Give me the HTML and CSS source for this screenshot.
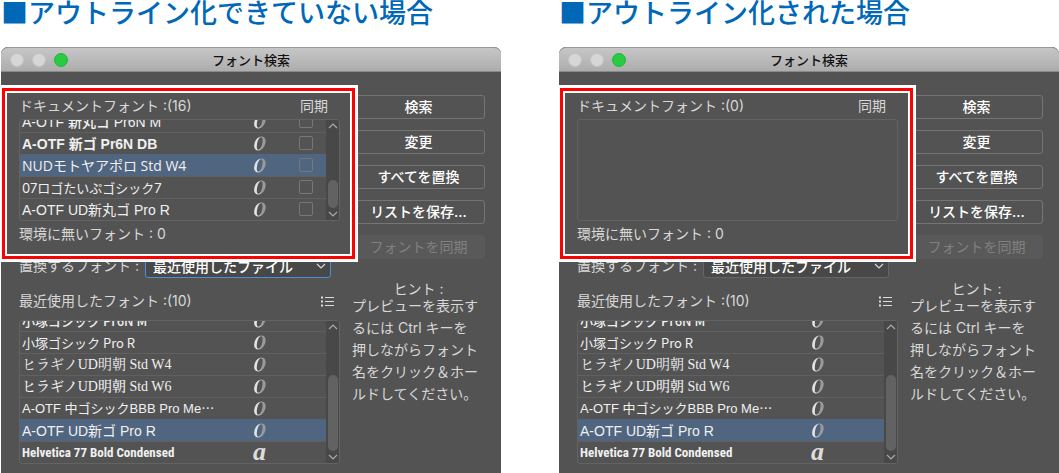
FILE: index.html
```html
<!DOCTYPE html>
<html lang="ja">
<head>
    <meta charset="UTF-8">
    <meta name="viewport" content="width=device-width, initial-scale=1.0">
    <title>フォント検索</title>
    <link rel="stylesheet" href="styles.css">
</head>
<body>
    <!-- Shared icons -->
    <svg class="sprite" aria-hidden="true">
        <defs>
            <linearGradient id="shade" x1="0" y1="0" x2="1" y2="0">
                <stop offset="0.35" stop-color="#e2e2e2"/>
                <stop offset="0.65" stop-color="#9a9a9a"/>
            </linearGradient>
            <symbol id="opentype" viewBox="0 0 14 16">
                <path fill="url(#shade)" fill-rule="evenodd" d="M8.4 .5C11.400 .5 13 2.700 12.600 6C12 10.800 9 14.500 5.400 14.500C2.400 14.500 .8 12.300 1.200 9C1.800 4.200 4.800 .5 8.400 .5ZM8 1.300C6 1.400 4.400 5 3.900 9.200C3.600 12.300 4.100 13.700 5.400 13.700C7.400 13.600 9 10 9.500 5.800C9.800 2.800 9.300 1.300 8 1.300Z"/>
            </symbol>
            <symbol id="up" viewBox="0 0 10 6">
                <path d="M1 5L5 1L9 5" fill="none" stroke="currentColor" stroke-width="1.2"/>
            </symbol>
            <symbol id="down" viewBox="0 0 10 6">
                <path d="M1 1L5 5L9 1" fill="none" stroke="currentColor" stroke-width="1.2"/>
            </symbol>
            <symbol id="menu" viewBox="0 0 14 11">
                <path d="M0 1.500H2M0 5.500H2M0 9.500H2" stroke="currentColor" stroke-width="2"/>
                <path d="M4 1.500H13M4 5.500H13M4 9.500H13" stroke="currentColor"/>
            </symbol>
        </defs>
    </svg>

    <main class="compare">
        <!-- Not outlined -->
        <section class="case">
            <h1>■アウトライン化できていない場合</h1>
            <div class="dialog">
                <div class="titlebar">
                    <span class="dot"></span><span class="dot"></span><span class="dot green"></span>
                    <h2>フォント検索</h2>
                </div>
                <div class="content">
                    <div class="fonts">
                        <div class="document-fonts">
                            <div class="label-row"><span>ドキュメントフォント :(16)</span><span class="sync">同期</span></div>
                            <div class="list">
                                <ul>
                                    <li><span class="name gothic medium">A-OTF 新丸ゴ Pr6N M</span><svg class="type"><use href="#opentype"/></svg><input type="checkbox" aria-label="同期"></li>
                                    <li><span class="name gothic bold">A-OTF 新ゴ Pr6N DB</span><svg class="type"><use href="#opentype"/></svg><input type="checkbox" aria-label="同期"></li>
                                    <li class="selected"><span class="name human">NUDモトヤアポロ Std W4</span><svg class="type"><use href="#opentype"/></svg><input type="checkbox" aria-label="同期"></li>
                                    <li><span class="name logo">07ロゴたいぷゴシック7</span><svg class="type"><use href="#opentype"/></svg><input type="checkbox" aria-label="同期"></li>
                                    <li><span class="name gothic">A-OTF UD新丸ゴ Pro R</span><svg class="type"><use href="#opentype"/></svg><input type="checkbox" aria-label="同期"></li>
                                </ul>
                                <div class="scrollbar">
                                    <svg class="arrow"><use href="#up"/></svg>
                                    <span class="thumb short"></span>
                                    <svg class="arrow"><use href="#down"/></svg>
                                </div>
                            </div>
                            <p class="missing">環境に無いフォント : 0</p>
                        </div>
                        <div class="replace">
                            <label for="replace1">置換するフォント :</label>
                            <span class="select focused">
                                <select id="replace1"><option>最近使用したファイル</option></select>
                                <svg><use href="#down"/></svg>
                            </span>
                        </div>
                        <div class="label-row recent"><span>最近使用したフォント :(10)</span><button class="menu" aria-label="メニュー"><svg><use href="#menu"/></svg></button></div>
                        <div class="list tall">
                            <ul>
                                <li><span class="name kozuka medium">小塚ゴシック Pr6N M</span><svg class="type"><use href="#opentype"/></svg></li>
                                <li><span class="name kozuka">小塚ゴシック Pro R</span><svg class="type"><use href="#opentype"/></svg></li>
                                <li><span class="name mincho">ヒラギノUD明朝 Std W4</span><svg class="type"><use href="#opentype"/></svg></li>
                                <li><span class="name mincho medium">ヒラギノUD明朝 Std W6</span><svg class="type"><use href="#opentype"/></svg></li>
                                <li><span class="name gothic small">A-OTF 中ゴシックBBB Pro Me⋯</span><svg class="type"><use href="#opentype"/></svg></li>
                                <li class="selected"><span class="name gothic">A-OTF UD新ゴ Pro R</span><svg class="type"><use href="#opentype"/></svg></li>
                                <li><span class="name narrow">Helvetica 77 Bold Condensed</span><span class="type letter">a</span></li>
                            </ul>
                            <div class="scrollbar">
                                <svg class="arrow"><use href="#up"/></svg>
                                <span class="thumb"></span>
                                <svg class="arrow"><use href="#down"/></svg>
                            </div>
                        </div>
                    </div>
                    <div class="actions">
                        <button>検索</button>
                        <button>変更</button>
                        <button>すべてを置換</button>
                        <button>リストを保存...</button>
                        <button disabled>フォントを同期</button>
                        <h3>ヒント :</h3>
                        <p>プレビューを表示す<br>るには Ctrl キーを<br>押しながらフォント<br>名をクリック＆ホー<br>ルドしてください。</p>
                    </div>
                </div>
            </div>
        </section>

        <!-- Outlined -->
        <section class="case">
            <h1>■アウトライン化された場合</h1>
            <div class="dialog">
                <div class="titlebar">
                    <span class="dot"></span><span class="dot"></span><span class="dot green"></span>
                    <h2>フォント検索</h2>
                </div>
                <div class="content">
                    <div class="fonts">
                        <div class="document-fonts">
                            <div class="label-row"><span>ドキュメントフォント :(0)</span><span class="sync">同期</span></div>
                            <div class="list"></div>
                            <p class="missing">環境に無いフォント : 0</p>
                        </div>
                        <div class="replace">
                            <label for="replace2">置換するフォント :</label>
                            <span class="select">
                                <select id="replace2"><option>最近使用したファイル</option></select>
                                <svg><use href="#down"/></svg>
                            </span>
                        </div>
                        <div class="label-row recent"><span>最近使用したフォント :(10)</span><button class="menu" aria-label="メニュー"><svg><use href="#menu"/></svg></button></div>
                        <div class="list tall">
                            <ul>
                                <li><span class="name kozuka medium">小塚ゴシック Pr6N M</span><svg class="type"><use href="#opentype"/></svg></li>
                                <li><span class="name kozuka">小塚ゴシック Pro R</span><svg class="type"><use href="#opentype"/></svg></li>
                                <li><span class="name mincho">ヒラギノUD明朝 Std W4</span><svg class="type"><use href="#opentype"/></svg></li>
                                <li><span class="name mincho medium">ヒラギノUD明朝 Std W6</span><svg class="type"><use href="#opentype"/></svg></li>
                                <li><span class="name gothic small">A-OTF 中ゴシックBBB Pro Me⋯</span><svg class="type"><use href="#opentype"/></svg></li>
                                <li class="selected"><span class="name gothic">A-OTF UD新ゴ Pro R</span><svg class="type"><use href="#opentype"/></svg></li>
                                <li><span class="name narrow">Helvetica 77 Bold Condensed</span><span class="type letter">a</span></li>
                            </ul>
                            <div class="scrollbar">
                                <svg class="arrow"><use href="#up"/></svg>
                                <span class="thumb"></span>
                                <svg class="arrow"><use href="#down"/></svg>
                            </div>
                        </div>
                    </div>
                    <div class="actions">
                        <button>検索</button>
                        <button>変更</button>
                        <button>すべてを置換</button>
                        <button>リストを保存...</button>
                        <button disabled>フォントを同期</button>
                        <h3>ヒント :</h3>
                        <p>プレビューを表示す<br>るには Ctrl キーを<br>押しながらフォント<br>名をクリック＆ホー<br>ルドしてください。</p>
                    </div>
                </div>
            </div>
        </section>
    </main>
</body>
</html>
```

FILE: styles.css
```css
* {
    box-sizing: border-box;
}
body {
    margin: 0;
    background: #fff;
    color: #d8d8d8;
    font-family: Inter, "Noto Sans CJK JP", sans-serif;
    font-size: 14px;
    line-height: 22px;
}
h1, h2, h3, p, ul {
    margin: 0;
    padding: 0;
}
.sprite {
    position: absolute;
    width: 0;
    height: 0;
}
.compare {
    display: grid;
    grid-template-columns: repeat(2, minmax(0, 1fr));
    gap: 58px;
    padding-left: 1px;
}
h1 {
    margin-bottom: 23px;
    color: #0068b7;
    font-family: "Noto Sans CJK JP", sans-serif;
    font-size: 27px;
    font-weight: 500;
    line-height: 24px;
    white-space: nowrap;
}

/* Dialog window */
.dialog {
    background: #535353;
    border-bottom: 1px solid #3c3c3c;
    border-radius: 7px 7px 0 0;
}
.titlebar {
    display: flex;
    align-items: center;
    gap: 8px;
    height: 25px;
    padding: 0 9px;
    background: linear-gradient(#c6c6c6, #adadad);
    border-top: 1px solid #999;
    border-bottom: 1px solid #8a8a8a;
    border-radius: 7px 7px 0 0;
}
.titlebar h2 {
    flex: 1;
    margin-right: 66px;
    color: #111;
    font-size: 13px;
    font-weight: 500;
    text-align: center;
}
.dot {
    width: 14px;
    height: 14px;
    border: 1px solid #c4c4c4;
    border-radius: 50%;
    background: #d6d6d6;
}
.dot.green {
    border-color: #25b53c;
    background: #28cb42;
}
.content {
    display: grid;
    grid-template-columns: minmax(0, 1fr) 133px;
    gap: 12px;
    padding: 23px 16px 9px 18px;
}

/* Font lists */
.document-fonts {
    position: relative;
}
.document-fonts::after {
    content: "";
    position: absolute;
    z-index: 1;
    top: -7px;
    right: -15px;
    bottom: -14px;
    left: -17px;
    border: 3px solid #f00;
    box-shadow: 0 0 0 3px #fff, inset 0 0 0 2px #fff;
    pointer-events: none;
}
.label-row {
    display: flex;
    justify-content: space-between;
    align-items: center;
}
.sync {
    margin-right: 12px;
}
.list {
    display: flex;
    height: 102px;
    margin: 2px 0;
    border: 1px solid #636363;
    border-radius: 3px;
    overflow: hidden;
}
.list.tall {
    height: 144px;
    margin: 8px 0 0;
}
.list ul {
    flex: 1;
    display: flex;
    flex-direction: column;
    justify-content: flex-end;
    list-style: none;
}
.list li {
    flex: none;
    display: grid;
    grid-template-columns: minmax(0, 1fr) 14px 32px 14px;
    align-items: center;
    height: 22px;
    padding: 0 13px 0 2px;
    border-top: 1px solid #606060;
    color: #f0f0f0;
}
.list li.selected {
    background: #50657f;
    border-color: #50657f;
}
.name {
    white-space: nowrap;
}
.type {
    width: 14px;
    height: 16px;
    margin-bottom: 1px;
}
.letter {
    font: italic bold 26px/14px "Liberation Serif", serif;
    color: #ddd;
}
.list input {
    grid-column: 4;
    appearance: none;
    width: 14px;
    height: 14px;
    margin: 0 0 2px;
    border: 1px solid #777;
    border-radius: 2px;
}
.gothic {
    font-family: "Liberation Sans", "Noto Sans CJK JP", sans-serif;
}
.human {
    font-family: "Open Sans", "Noto Sans CJK JP", sans-serif;
}
.kozuka {
    font-family: "Noto Sans CJK JP", sans-serif;
    font-size: 13px;
}
.logo,
.small {
    font-size: 13px;
}
.mincho {
    font-family: "Liberation Serif", "Noto Serif CJK JP", "Noto Sans CJK JP", serif;
}
.medium {
    font-weight: 500;
}
.bold {
    font-weight: bold;
}
.narrow {
    font-family: "Roboto Condensed", Roboto, sans-serif;
    font-size: 13px;
    font-weight: bold;
}
.scrollbar {
    display: flex;
    flex-direction: column;
    align-items: center;
    width: 13px;
    padding: 3px 0;
    background: #484848;
    color: #aaa;
}
.arrow {
    width: 10px;
    height: 6px;
}
.thumb {
    width: 10px;
    height: 76px;
    margin: auto 0 3px;
    border-radius: 5px;
    background: #626262;
}
.thumb.short {
    height: 28px;
}

/* Replacement font */
.replace {
    display: flex;
    justify-content: space-between;
    gap: 3px;
    margin: 10px 9px 12px 0;
    white-space: nowrap;
}
.select {
    position: relative;
    width: 186px;
}
.select select {
    appearance: none;
    display: block;
    width: 100%;
    height: 23px;
    padding: 0 7px;
    border: 1px solid #656565;
    border-radius: 3px;
    background: #484848;
    color: #fff;
    font: 500 14px/20px Inter, "Noto Sans CJK JP", sans-serif;
}
.select.focused select {
    border-color: #4a90d9;
}
.select svg {
    position: absolute;
    top: 8px;
    right: 5px;
    width: 10px;
    height: 6px;
    pointer-events: none;
}
.menu {
    margin-right: 5px;
    padding: 0;
    border: 0;
    background: none;
    color: #ddd;
    line-height: 0;
}
.menu svg {
    width: 14px;
    height: 11px;
}

/* Buttons and hint */
.actions {
    display: flex;
    flex-direction: column;
}
.actions button {
    height: 24px;
    margin-bottom: 11px;
    padding: 0;
    border: 1px solid #757575;
    border-radius: 3px;
    background: #535353;
    color: #fff;
    font: 500 14px/20px Inter, "Noto Sans CJK JP", sans-serif;
}
.actions button:disabled {
    border-color: #595959;
    background: #595959;
    color: #808080;
    font-weight: 400;
}
.actions h3 {
    margin-top: 13px;
    font-size: 14px;
    font-weight: 400;
    line-height: 12px;
    text-align: center;
}
.actions p {
    white-space: nowrap;
}
```
